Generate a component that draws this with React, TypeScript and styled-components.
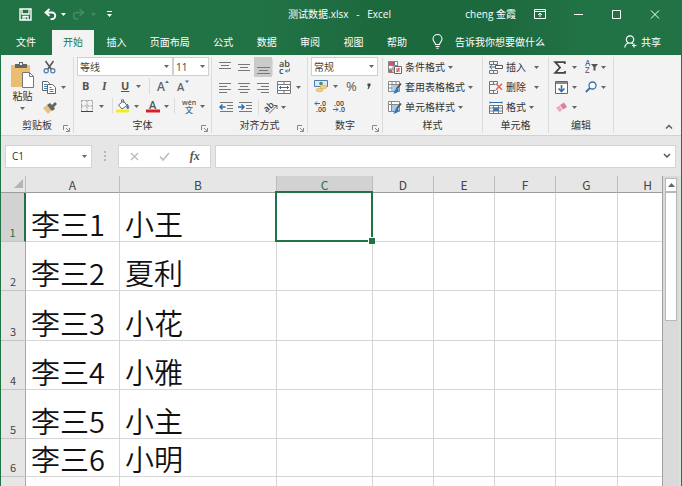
import React from "react";
import styled, { createGlobalStyle, css } from "styled-components";

const GREEN = "#217346";

const GlobalStyle = createGlobalStyle`
  * { box-sizing: border-box; }
  body { margin: 0; }
  body, button, input, select, table {
    font-family: "Open Sans", "Noto Sans CJK SC", sans-serif;
    font-size: 10px;
    line-height: 14px;
    color: #333;
  }
  button, input, select { margin: 0; padding: 0; border: 0; background: transparent; border-radius: 0; }
  svg { display: block; flex: none; overflow: visible; }
`;

const Window = styled.div`
  display: flex;
  flex-direction: column;
  height: 100vh;
  overflow: hidden;
  background: #e6e6e6;
  border-left: 1px solid ${GREEN};
  border-right: 1px solid ${GREEN};
`;

const Banner = styled.header`
  flex: none;
  color: #fff;
  background: linear-gradient(90deg, #217346 0%, #217346 38%, #1d693e 55%, #1d693e 74%, #217346 86%, #217346 100%);
`;

const TitleBar = styled.div`
  display: grid;
  grid-template-columns: 1fr auto 1fr;
  align-items: center;
  height: 30px;
  padding: 0 4px 2px 1px;
`;

const Title = styled.h1`
  margin: 0;
  font-size: 10px;
  font-weight: 400;
  white-space: pre;
`;

const QuickAccess = styled.div`
  display: flex;
  align-items: center;
  padding-left: 8px;
`;

const WindowControls = styled.div`
  display: flex;
  align-items: center;
  justify-content: flex-end;
`;

const Account = styled.span`
  margin-right: 6px;
`;

const BarButton = styled.button<{ $w: number; $dim?: boolean }>`
  display: flex;
  align-items: center;
  justify-content: center;
  width: ${(p) => p.$w}px;
  height: 24px;
  color: ${(p) => (p.$dim ? "#5b9a77" : "#fff")};
`;

const TabBar = styled.div`
  display: flex;
  align-items: stretch;
  height: 25px;
`;

const TabList = styled.nav`
  display: flex;
  justify-content: space-between;
  flex: 0 0 366px;
`;

const Tab = styled.button<{ $active?: boolean }>`
  padding: 0 11px 2px;
  white-space: nowrap;
  color: ${(p) => (p.$active ? GREEN : "#fff")};
  background: ${(p) => (p.$active ? "#f3f3f3" : "transparent")};
`;

const FileTab = styled(Tab)`
  flex: 0 0 51px;
  padding: 0 1px 2px 0;
`;

const TellMe = styled.button`
  display: flex;
  align-items: center;
  gap: 12px;
  padding: 0 0 2px 14px;
  color: #fff;
  white-space: nowrap;
`;

const Share = styled.button`
  display: flex;
  align-items: center;
  gap: 4px;
  margin-left: auto;
  padding: 0 20px 2px 0;
  color: #fff;
`;

const Ribbon = styled.div`
  display: flex;
  flex: none;
  height: 81px;
  padding: 2px 0;
  background: #f3f3f3;
  border-bottom: 1px solid #d2d2d2;
`;

const Group = styled.section<{ $w: number }>`
  display: flex;
  flex-direction: column;
  flex: 0 0 ${(p) => p.$w}px;
  border-right: 1px solid #dcdcdc;
`;

const GroupFooter = styled.div`
  display: grid;
  grid-template-columns: 13px 1fr 13px;
  align-items: center;
  height: 20px;
`;

const GroupName = styled.h2`
  grid-column: 2;
  margin: 0;
  font-size: 10px;
  font-weight: 400;
  text-align: center;
  white-space: nowrap;
`;

const Launcher = styled.button`
  display: grid;
  place-items: end center;
  height: 14px;
`;

const ToolRow = styled.div<{ $pad: number }>`
  display: flex;
  align-items: center;
  height: 20px;
  padding-left: ${(p) => p.$pad}px;
`;

const Tool = styled.button<{ $w: number; $gap?: number; $on?: boolean }>`
  display: flex;
  align-items: center;
  gap: ${(p) => p.$gap ?? 5}px;
  flex: 0 0 ${(p) => p.$w}px;
  height: 20px;
  white-space: nowrap;
  color: #444;
  ${(p) =>
    p.$on &&
    css`
      justify-content: center;
      background: #cbcbcb;
    `}
`;

const WideTool = styled.button`
  display: flex;
  align-items: center;
  gap: 3px;
  height: 20px;
  white-space: nowrap;
`;

const SplitTool = styled(WideTool)`
  & > svg:last-child { margin-left: 5px; }
`;

const Letter = styled.span<{ $bold?: boolean; $italic?: boolean; $underline?: boolean; $size?: number }>`
  font-family: ${(p) => (p.$italic ? '"Liberation Serif", serif' : '"Open Sans", sans-serif')};
  font-size: ${(p) => p.$size ?? 11}px;
  font-weight: ${(p) => (p.$bold ? 700 : 400)};
  font-style: ${(p) => (p.$italic ? "italic" : "normal")};
  text-decoration: ${(p) => (p.$underline ? "underline" : "none")};
  color: #555;
`;

const Divider = styled.span<{ $space: number }>`
  flex: none;
  width: 1px;
  height: 16px;
  margin-right: ${(p) => p.$space}px;
  background: #dcdcdc;
`;

const ClipboardBody = styled.div`
  display: flex;
  height: 60px;
`;

const PasteButton = styled.button`
  display: flex;
  flex-direction: column;
  align-items: center;
  flex: 0 0 41px;
  padding: 4px 0 0 2px;
  color: #333;
`;

const PasteLabel = styled.span`
  margin: 0 0 4px;
`;

const SelectBox = styled.span<{ $w: number }>`
  display: grid;
  align-items: center;
  flex: 0 0 ${(p) => p.$w}px;
  height: 19px;
  background: #fff;
  border: 1px solid #d0d0d0;
  & > * { grid-area: 1 / 1; }
  & > svg { justify-self: end; margin-right: 3px; pointer-events: none; }
`;

const Select = styled.select`
  appearance: none;
  width: 100%;
  height: 17px;
  padding-left: 2px;
  color: #444;
`;

const CollapseArea = styled.div`
  display: flex;
  flex: 1;
  align-items: flex-end;
  justify-content: flex-end;
  padding: 0 8px 4px 0;
`;

const FormulaBar = styled.div`
  display: flex;
  flex: none;
  align-items: center;
  height: 40px;
  padding: 0 5px 0 4px;
`;

const NameBox = styled.div`
  display: flex;
  align-items: center;
  flex: 0 0 87px;
  min-width: 0;
  height: 23px;
  padding-right: 4px;
  background: #fff;
  border: 1px solid #d4d4d4;
`;

const NameInput = styled.input`
  flex: 1;
  width: 0;
  min-width: 0;
  padding-left: 6px;
  outline: none;
`;

const Grip = styled.span`
  display: grid;
  place-items: center;
  flex: 0 0 26px;
`;

const FormulaTools = styled.div`
  display: flex;
  align-items: center;
  justify-content: space-around;
  flex: 0 0 93px;
  height: 23px;
  margin-right: 4px;
  background: #fff;
  border: 1px solid #d4d4d4;
`;

const PlainButton = styled.button`
  display: grid;
  place-items: center;
  width: 16px;
  height: 16px;
`;

const FormulaField = styled.div`
  display: flex;
  align-items: center;
  flex: 1;
  min-width: 0;
  height: 23px;
  background: #fff;
  border: 1px solid #d4d4d4;
`;

const FormulaInput = styled.input`
  flex: 1;
  min-width: 0;
  padding-left: 4px;
  outline: none;
`;

const Workspace = styled.main`
  display: flex;
  flex: 1;
  min-height: 0;
`;

const SheetPane = styled.div`
  flex: 1;
  min-width: 0;
  overflow: hidden;
  border-right: 1px solid #a0a0a0;
`;

const Sheet = styled.table`
  width: 100%;
  table-layout: fixed;
  border-collapse: separate;
  border-spacing: 0;
  font-family: "Noto Sans CJK SC", sans-serif;
`;

const Col = styled.col<{ $w?: number }>`
  width: ${(p) => (p.$w ? `${p.$w}px` : "auto")};
`;

const ColumnHead = styled.th<{ $active?: boolean }>`
  height: 17px;
  padding: 0;
  font-family: inherit;
  font-size: 12px;
  font-weight: 400;
  line-height: 14px;
  vertical-align: bottom;
  color: ${(p) => (p.$active ? GREEN : "#444")};
  background: ${(p) => (p.$active ? "#d2d2d2" : "#e6e6e6")};
  border-right: 1px solid #bdbdbd;
  border-bottom: 1px solid #9c9c9c;
  &:last-child { border-right: 0; padding-left: 15px; }
`;

const Corner = styled.td`
  height: 17px;
  padding: 0 2px 1px 0;
  border-right: 1px solid #bdbdbd;
  border-bottom: 1px solid #9c9c9c;
  & > svg { margin-left: auto; }
`;

const RowHead = styled.th<{ $active?: boolean; $h: number }>`
  height: ${(p) => p.$h}px;
  padding: 0;
  font-size: 11px;
  font-weight: 400;
  line-height: 18px;
  vertical-align: bottom;
  color: ${(p) => (p.$active ? GREEN : "#444")};
  background: ${(p) => (p.$active ? "#d2d2d2" : "#e6e6e6")};
  border-right: ${(p) => (p.$active ? `2px solid ${GREEN}` : "1px solid #a8a8a8")};
  border-bottom: 1px solid #c4c4c4;
`;

const Cell = styled.td<{ $selected?: boolean }>`
  padding: 0 0 2px 5px;
  font-size: 29px;
  font-weight: 350;
  line-height: 32px;
  vertical-align: bottom;
  white-space: nowrap;
  color: #111;
  background: #fff;
  border-right: 1px solid #d6d6d6;
  border-bottom: 1px solid #d6d6d6;
  &:last-child { border-right: 0; }
  ${(p) =>
    p.$selected &&
    css`
      position: relative;
      &::before {
        content: "";
        position: absolute;
        inset: -2px -1px -1px -2px;
        border: 2px solid ${GREEN};
      }
      &::after {
        content: "";
        position: absolute;
        right: -3px;
        bottom: -3px;
        width: 6px;
        height: 6px;
        background: ${GREEN};
        border: 1px solid #fff;
        border-width: 1px 0 0 1px;
      }
    `}
`;

const ScrollBar = styled.div`
  display: flex;
  flex-direction: column;
  flex: 0 0 18px;
  padding: 2px 2px 0 2px;
  background: #dadada;
  border-right: 2px solid #cfe8db;
`;

const ScrollUp = styled.button`
  display: grid;
  place-items: center;
  flex: 0 0 14px;
  background: #fff;
  border: 1px solid #b8b8b8;
`;

const ScrollThumb = styled.div`
  flex: 0 0 129px;
  background: #fff;
  border: 1px solid #b8b8b8;
`;

const Caret = ({ color = "#666" }: { color?: string }) => (
  <svg width="5" height="3" viewBox="0 0 5 3"><path d="M0 0h5L2.5 3z" fill={color} /></svg>
);

type IconProps = { w: number; h: number; children: React.ReactNode; stroke?: string };
const Icon = ({ w, h, children, stroke = "#666" }: IconProps) => (
  <svg width={w} height={h} viewBox={`0 0 ${w} ${h}`} fill="none" stroke={stroke} strokeWidth="1" aria-hidden="true">
    {children}
  </svg>
);

const Save = () => (
  <Icon w={13} h={13} stroke="#fff">
    <path d="M1 1h11v11H1z" strokeWidth="1.4" />
    <path d="M3 1.5v4.5h7V1.5" strokeWidth="1.3" />
    <path d="M4 12V8.5h5V12M6 9v3" strokeWidth="1.3" />
  </Icon>
);

const Undo = () => (
  <Icon w={13} h={12} stroke="#fff">
    <path d="M5.5 1L1.5 4.5l4 3.5M2 4.5h6a3.3 3.3 0 0 1 0 6.6H6.5" strokeWidth="1.8" />
  </Icon>
);

const Redo = () => (
  <Icon w={13} h={12} stroke="#438c63">
    <path d="M7.5 1l4 3.5-4 3.5M11 4.5H5a3.3 3.3 0 0 0 0 6.6h1" strokeWidth="1.6" />
  </Icon>
);

const PasteIcon = () => (
  <Icon w={25} h={28}>
    <path d="M1 4h19v22H1z" fill="#ebbd70" stroke="none" />
    <path d="M5 3h4V1h4v2h4v4H5z" fill="#666" stroke="none" />
    <path d="M10 2h2v2h-2z" fill="#f3f3f3" stroke="none" />
    <path d="M12.5 11.5h7l4 4v11h-11z" fill="#fff" stroke="#777" />
    <path d="M19.5 11.5v4h4" stroke="#777" />
  </Icon>
);

const Cut = () => (
  <Icon w={13} h={14}>
    <path d="M2.5 1l6 8.5M10.5 1l-6 8.5" stroke="#555" strokeWidth="1.5" />
    <circle cx="3.2" cy="10.8" r="2.1" stroke="#4a7dae" strokeWidth="1.2" />
    <circle cx="9.8" cy="10.8" r="2.1" stroke="#4a7dae" strokeWidth="1.2" />
  </Icon>
);

const Copy = () => (
  <Icon w={14} h={13}>
    <path d="M.5.5h5l2 2v7h-7z" fill="#fff" />
    <path d="M2 3.5h3M2 5.5h3M2 7.5h3" stroke="#4a7dae" />
    <path d="M5.5 3.5h5l3 3v6h-8z" fill="#fff" />
    <path d="M7.5 6.5h2M7.5 8.5h4M7.5 10.5h4" stroke="#4a7dae" />
  </Icon>
);

const Brush = () => (
  <Icon w={14} h={13}>
    <path d="M0 7l4-3 5 5-4 4z" fill="#e5c27e" stroke="none" />
    <path d="M4 4l3-2 2 2 3-3 2 2-3 3 1 2-3 2z" fill="#666" stroke="none" />
  </Icon>
);

const Borders = () => (
  <Icon w={12} h={12} stroke="#999">
    <path d="M.5.5h11v11H.5zM6 .5v11M.5 6h11" strokeDasharray="2 1" />
    <path d="M0 11.5h12" stroke="#444" />
  </Icon>
);

const Fill = () => (
  <Icon w={14} h={14}>
    <path d="M2.5 6l5-4 3.5 4.5-5 3.5z" fill="#fff" stroke="#666" />
    <path d="M5.5 4V.8h2V4" stroke="#777" />
    <path d="M11 5c1.5 1.5 2 3 1.5 4.5h-1.5z" fill="#4a7dae" stroke="#4a7dae" />
    <path d="M0 10.5h13v3H0z" fill="#f2ee1b" stroke="none" />
  </Icon>
);

const FontColor = () => (
  <Icon w={14} h={14}>
    <text x="3" y="9.5" fontSize="11" fontWeight="600" fontFamily="Open Sans" fill="#555" stroke="none">A</text>
    <path d="M0 10.5h14v3H0z" fill="#dc1f26" stroke="none" />
  </Icon>
);

const Phonetic = () => (
  <Icon w={14} h={15}>
    <text x="0" y="6" fontSize="7" fontWeight="600" fontFamily="Open Sans" fill="#555" stroke="none">wén</text>
    <text x="3" y="14" fontSize="8" fontWeight="500" fontFamily="Noto Sans CJK SC" fill="#3a6ea5" stroke="none">文</text>
  </Icon>
);

const GrowFont = ({ up }: { up?: boolean }) => (
  <Icon w={12} h={13}>
    <text x="0" y="11" fontSize={up ? 12 : 11} fontWeight="600" fontFamily="Open Sans" fill="#666" stroke="none">A</text>
    <path d={up ? "M8 3h4L10 .5z" : "M8 .5h4L10 3z"} fill="#4a6f96" stroke="none" />
  </Icon>
);

const Lines = ({ rows }: { rows: [number, number, number][] }) => (
  <Icon w={13} h={13} stroke="#777">
    {rows.map(([x, y, w]) => <path key={y} d={`M${x} ${y + 0.5}h${w}`} />)}
  </Icon>
);

const Wrap = () => (
  <Icon w={13} h={15}>
    <text x="0" y="7" fontSize="9" fontWeight="600" fontFamily="Open Sans" fill="#444" stroke="none">ab</text>
    <text x="0" y="14" fontSize="9" fontWeight="600" fontFamily="Open Sans" fill="#444" stroke="none">c</text>
    <path d="M10.5 8.5v2.5H6.5M8 9.5L6.5 11 8 12.5" stroke="#3a6ea5" />
  </Icon>
);

const Merge = () => (
  <Icon w={14} h={13} stroke="#777">
    <path d="M.5.5h13v12H.5zM.5 3.5h13M.5 9.5h13M7 .5v3M7 9.5v3" fill="#fff" />
    <path d="M2 6.5h10M4 5L2.5 6.5 4 8M10 5l1.5 1.5L10 8" stroke="#3a6ea5" />
  </Icon>
);

const Indent = ({ right }: { right?: boolean }) => (
  <Icon w={14} h={12} stroke="#777">
    <path d="M1 1.5h13M8 4.5h6M8 7.5h6M1 10.5h13" />
    <path d={right ? "M0 6h5.5M3.5 3.5L6 6 3.5 8.5" : "M6.5 6H1M3.5 3.5L1 6l2.5 2.5"} stroke="#2f6fae" strokeWidth="1.5" />
  </Icon>
);

const Orientation = () => (
  <Icon w={14} h={13}>
    <text x="0" y="9" fontSize="9" fontWeight="600" fontFamily="Open Sans" fill="#444" stroke="none" transform="rotate(-42 5 7)">ab</text>
    <path d="M5 12.5l8-8M9.5 4.5H13V8" stroke="#666" />
  </Icon>
);

const Currency = () => (
  <Icon w={15} h={14}>
    <path d="M.5 1.5h13v6H.5z" fill="#dbeaf6" stroke="#4a7dae" />
    <circle cx="7" cy="4.5" r="1.8" fill="#4a9060" stroke="none" />
    <ellipse cx="9.5" cy="8" rx="3.5" ry="1.7" fill="#f0cf7a" stroke="#d3a94e" strokeWidth=".6" />
    <ellipse cx="5.5" cy="11" rx="3.5" ry="1.7" fill="#f0cf7a" stroke="#d3a94e" strokeWidth=".6" />
  </Icon>
);

const Decimals = ({ less }: { less?: boolean }) => (
  <Icon w={13} h={13}>
    <g fill="#444" stroke="none" fontSize="7" fontWeight="600" fontFamily="Open Sans">
      <text x={less ? 1 : 6} y="6">{less ? ".00" : ".0"}</text>
      <text x={less ? 6 : 2} y="12">{less ? ".0" : ".00"}</text>
    </g>
    <path d={less ? "M0 9.5h5M3 7.5l2 2-2 2" : "M6 3.5H1M3 1.5l-2 2 2 2"} stroke="#2f6fae" />
  </Icon>
);

const Conditional = () => (
  <Icon w={14} h={13} stroke="#888">
    <path d="M.5.5h9v11h-9zM.5 4.5h9M.5 8h9M5 .5v11" fill="#fff" />
    <path d="M1 1h4v3H1zM1 8.5h3v3H1z" fill="#d9555a" stroke="none" />
    <path d="M5 1h2v3H5z" fill="#4a7dae" stroke="none" />
    <path d="M6.5 5.5h7v7h-7z" fill="#fff" stroke="#666" />
    <path d="M8 8h4M8 10h4M11 6.8L9 11.2" stroke="#c34a50" />
  </Icon>
);

const StyleBrush = ({ cell }: { cell?: boolean }) => (
  <Icon w={14} h={13} stroke="#888">
    <path d={cell ? "M.5.5h11v10H.5zM.5 3.5h11M3.5.5v10" : "M.5.5h11v10H.5zM.5 3.5h11M.5 7h11M4 .5v10M8 .5v10"} fill="#fff" />
    <path d="M4 4h7v3l-4 3H4z" fill="#a8cbea" stroke="none" />
    <path d="M13 2.5L8.5 8" stroke="#555" strokeWidth="1.8" />
    <path d="M9 7l2 2c-1 3-4 3.5-6 3.5 2-1 1.5-4 4-5.5z" fill="#3777b5" stroke="none" />
  </Icon>
);

const InsertCells = () => (
  <Icon w={14} h={13} stroke="#777">
    <path d="M.5 3.5v-3h8v3M4.5.5v3M.5 3.5h8M.5 9.5v3h8v-3M4.5 9.5v3M.5 9.5h8" />
    <path d="M6.5 4.5h7v3h-7z" fill="#fff" stroke="#555" />
    <path d="M6 6H.5M3 3.8L.8 6 3 8.2" stroke="#2f6fae" />
  </Icon>
);

const DeleteCells = () => (
  <Icon w={14} h={13} stroke="#777">
    <path d="M.5 3.5v-3h8v3M4.5.5v3M.5 9.5v3h8v-3M4.5 9.5v3M.5 9.5h6M.5 3.5h6M.5 3.5v6h5" />
    <path d="M7 2.8l6 6M13 2.8l-6 6" stroke="#d9655f" strokeWidth="1.5" />
  </Icon>
);

const FormatCells = () => (
  <Icon w={14} h={13} stroke="#777">
    <path d="M1 1.5h12M1 .5v2M13 .5v2" stroke="#2f6fae" />
    <path d="M.5 4.5h13v8H.5zM.5 7h13M.5 10h13M4.5 4.5v8M9.5 4.5v8" fill="#fff" />
    <path d="M5 6.5h4.5v3.5H5z" fill="#3777b5" stroke="none" />
  </Icon>
);

const Sum = () => (
  <Icon w={14} h={13}>
    <path d="M11.8 3V1.2H2.2L7 6.5l-4.8 5.3h9.8V10" stroke="#444" strokeWidth="1.8" />
  </Icon>
);

const SortFilter = () => (
  <Icon w={14} h={14}>
    <g stroke="none" fontSize="8" fontFamily="Open Sans" fontWeight="600">
      <text x="0" y="6" fill="#3a6ea5">A</text>
      <text x="0" y="13" fill="#7a5b99">Z</text>
    </g>
    <path d="M6 4h7l-2.500 3v3.500h-2V7z" fill="#555" stroke="none" />
  </Icon>
);

const FillDown = () => (
  <Icon w={13} h={13} stroke="#666">
    <path d="M.5.5h12v12H.5z" fill="#fff" />
    <path d="M1 1h11v2H1z" fill="#888" stroke="none" />
    <path d="M6.5 4v6.5M3.5 7.5l3 3 3-3" stroke="#2f6fae" strokeWidth="1.6" />
  </Icon>
);

const Find = () => (
  <Icon w={13} h={12}>
    <circle cx="7.5" cy="4.5" r="3.5" fill="#fff" stroke="#3a6ea5" strokeWidth="1.3" />
    <path d="M5 7L.8 11" stroke="#3a6ea5" strokeWidth="1.8" />
  </Icon>
);

const Eraser = () => (
  <Icon w={13} h={11}>
    <path d="M5 3l4-2.5L12 5 8 7.5z" fill="#e07f9c" stroke="none" />
    <path d="M4.3 3.5L7.3 8l-2.800 2L1 5.700z" fill="#eda9bd" stroke="none" />
  </Icon>
);

const Bulb = () => (
  <Icon w={11} h={15} stroke="#fff">
    <path d="M3.5 10.5C3.5 8.5 1 7.5 1 5a4.5 4.5 0 0 1 9 0c0 2.5-2.5 3.5-2.5 5.5zM3.5 12.5h4M4.5 14.3h2" strokeWidth="1.1" />
  </Icon>
);

const Person = () => (
  <Icon w={13} h={13} stroke="#fff">
    <circle cx="6" cy="4.5" r="3.7" strokeWidth="1.2" />
    <path d="M.8 12.5c.3-2.5 1.7-4 3.7-4.5M7.5 8l1.5.8M10 8.5v4M8 10.5h4.5" strokeWidth="1.2" />
  </Icon>
);

const LauncherIcon = () => (
  <Icon w={7} h={7} stroke="#888">
    <path d="M.5 5V.5H5M3 3l3 3M6.5 3v3.5H3" />
  </Icon>
);

type GroupProps = { name: string; w: number; launcher?: boolean; children: React.ReactNode };
const RibbonGroup = ({ name, w, launcher, children }: GroupProps) => (
  <Group $w={w} aria-label={name}>
    {children}
    <GroupFooter>
      <GroupName>{name}</GroupName>
      {launcher && <Launcher aria-label={`${name}设置`}><LauncherIcon /></Launcher>}
    </GroupFooter>
  </Group>
);

const tabs = ["开始", "插入", "页面布局", "公式", "数据", "审阅", "视图", "帮助"];
const columns: { name: string; w?: number }[] = [
  { name: "A", w: 94 }, { name: "B", w: 157 }, { name: "C", w: 96 }, { name: "D", w: 61 },
  { name: "E", w: 61 }, { name: "F", w: 61 }, { name: "G", w: 62 }, { name: "H" },
];
const rows: { h: number; values: string[] }[] = [
  { h: 49, values: ["李三1", "小王"] },
  { h: 49, values: ["李三2", "夏利"] },
  { h: 50, values: ["李三3", "小花"] },
  { h: 49, values: ["李三4", "小雅"] },
  { h: 49, values: ["李三5", "小主"] },
  { h: 38, values: ["李三6", "小明"] },
  { h: 49, values: [] },
];

export default function App() {
  return (
    <Window lang="zh-CN">
      <GlobalStyle />
      <Banner>
        <TitleBar>
          <QuickAccess>
            <BarButton $w={31} aria-label="保存"><Save /></BarButton>
            <BarButton $w={18} aria-label="撤消"><Undo /></BarButton>
            <BarButton $w={8} aria-label="撤消列表"><Caret color="#fff" /></BarButton>
            <BarButton $w={22} $dim aria-label="恢复"><Redo /></BarButton>
            <BarButton $w={8} $dim aria-label="恢复列表"><Caret color="#438c63" /></BarButton>
            <BarButton $w={24} aria-label="自定义快速访问工具栏">
              <Icon w={5} h={6} stroke="#fff"><path d="M0 .5h5" /><path d="M0 3h5L2.5 6z" fill="#fff" stroke="none" /></Icon>
            </BarButton>
          </QuickAccess>
          <Title>{"测试数据.xlsx   -   Excel"}</Title>
          <WindowControls>
            <Account>cheng 金霞</Account>
            <BarButton $w={35} aria-label="功能区显示选项">
              <Icon w={12} h={10} stroke="#fff"><path d="M.5.5h11v9H.5zM.5 2.5h11M6 8V4.5M4 6l2-2 2 2" /></Icon>
            </BarButton>
            <BarButton $w={42} aria-label="最小化"><Icon w={9} h={1} stroke="#fff"><path d="M0 .5h9" /></Icon></BarButton>
            <BarButton $w={34} aria-label="最大化"><Icon w={9} h={9} stroke="#fff"><path d="M.5.5h8v8h-8z" /></Icon></BarButton>
            <BarButton $w={44} aria-label="关闭"><Icon w={10} h={9} stroke="#fff"><path d="M1 .5l8 8M9 .5l-8 8" /></Icon></BarButton>
          </WindowControls>
        </TitleBar>
        <TabBar>
          <FileTab>文件</FileTab>
          <TabList>
            {tabs.map((t, i) => <Tab key={t} $active={i === 0}>{t}</Tab>)}
          </TabList>
          <TellMe><Bulb />告诉我你想要做什么</TellMe>
          <Share><Person />共享</Share>
        </TabBar>
      </Banner>

      <Ribbon>
        <RibbonGroup name="剪贴板" w={73} launcher>
          <ClipboardBody>
            <PasteButton><PasteIcon /><PasteLabel>粘贴</PasteLabel><Caret /></PasteButton>
            <div>
              <ToolRow $pad={1}><Tool $w={14} aria-label="剪切"><Cut /></Tool></ToolRow>
              <ToolRow $pad={0}><Tool $w={26} aria-label="复制"><Copy /><Caret /></Tool></ToolRow>
              <ToolRow $pad={1}><Tool $w={14} aria-label="格式刷"><Brush /></Tool></ToolRow>
            </div>
          </ClipboardBody>
        </RibbonGroup>

        <RibbonGroup name="字体" w={138} launcher>
          <ToolRow $pad={3}>
            <SelectBox $w={96}><Select aria-label="字体名称"><option>等线</option></Select><Caret /></SelectBox>
            <SelectBox $w={36}><Select aria-label="字号"><option>11</option></Select><Caret /></SelectBox>
          </ToolRow>
          <ToolRow $pad={8}>
            <Tool $w={20} aria-label="加粗"><Letter $bold>B</Letter></Tool>
            <Tool $w={19} aria-label="倾斜"><Letter $italic $bold $size={12}>I</Letter></Tool>
            <Tool $w={28} $gap={7} aria-label="下划线"><Letter $bold $underline>U</Letter><Caret /></Tool>
            <Divider $space={7} />
            <Tool $w={20} aria-label="增大字号"><GrowFont up /></Tool>
            <Tool $w={14} aria-label="减小字号"><GrowFont /></Tool>
          </ToolRow>
          <ToolRow $pad={7}>
            <Tool $w={31} $gap={6} aria-label="边框"><Borders /><Caret /></Tool>
            <Divider $space={3} />
            <Tool $w={30} $gap={4} aria-label="填充颜色"><Fill /><Caret /></Tool>
            <Tool $w={28} $gap={4} aria-label="字体颜色"><FontColor /><Caret /></Tool>
            <Divider $space={7} />
            <Tool $w={24} $gap={4} aria-label="拼音"><Phonetic /><Caret /></Tool>
          </ToolRow>
        </RibbonGroup>

        <RibbonGroup name="对齐方式" w={96} launcher>
          <ToolRow $pad={7}>
            <Tool $w={19} aria-label="顶端对齐"><Lines rows={[[0, 1, 12], [2, 4, 8], [0, 7, 12]]} /></Tool>
            <Tool $w={16} aria-label="垂直居中"><Lines rows={[[0, 3, 12], [2, 6, 8], [0, 9, 12]]} /></Tool>
            <Tool $w={18} $on aria-label="底端对齐"><Lines rows={[[0, 6, 13], [2, 9, 9], [0, 12, 13]]} /></Tool>
            <Divider $space={6} />
            <Tool $w={14} aria-label="自动换行"><Wrap /></Tool>
          </ToolRow>
          <ToolRow $pad={7}>
            <Tool $w={19} aria-label="左对齐"><Lines rows={[[0, 2, 12], [0, 5, 8], [0, 8, 12], [0, 11, 8]]} /></Tool>
            <Tool $w={19} aria-label="居中"><Lines rows={[[0, 2, 12], [2, 5, 8], [0, 8, 12], [2, 11, 8]]} /></Tool>
            <Tool $w={20} aria-label="右对齐"><Lines rows={[[0, 2, 12], [4, 5, 8], [0, 8, 12], [4, 11, 8]]} /></Tool>
            <Tool $w={24} aria-label="合并后居中"><Merge /><Caret /></Tool>
          </ToolRow>
          <ToolRow $pad={7}>
            <Tool $w={19} aria-label="减少缩进量"><Indent /></Tool>
            <Tool $w={20} aria-label="增加缩进量"><Indent right /></Tool>
            <Divider $space={5} />
            <Tool $w={24} $gap={3} aria-label="方向"><Orientation /><Caret /></Tool>
          </ToolRow>
        </RibbonGroup>

        <RibbonGroup name="数字" w={75} launcher>
          <ToolRow $pad={3}>
            <SelectBox $w={67}><Select aria-label="数字格式"><option>常规</option></Select><Caret /></SelectBox>
          </ToolRow>
          <ToolRow $pad={6}>
            <Tool $w={32} $gap={4} aria-label="会计数字格式"><Currency /><Caret /></Tool>
            <Tool $w={21} aria-label="百分比样式"><Letter $size={13}>%</Letter></Tool>
            <Tool $w={8} aria-label="千位分隔样式"><Icon w={4} h={7}><path d="M.5.5h3v2L1.5 6H.5L1.5 3H.5z" fill="#444" stroke="none" /></Icon></Tool>
          </ToolRow>
          <ToolRow $pad={6}>
            <Tool $w={19} aria-label="增加小数位数"><Decimals /></Tool>
            <Tool $w={14} aria-label="减少小数位数"><Decimals less /></Tool>
          </ToolRow>
        </RibbonGroup>

        <RibbonGroup name="样式" w={100}>
          <ToolRow $pad={5}><WideTool><Conditional />条件格式<Caret /></WideTool></ToolRow>
          <ToolRow $pad={5}><WideTool><StyleBrush />套用表格格式<Caret /></WideTool></ToolRow>
          <ToolRow $pad={5}><WideTool><StyleBrush cell />单元格样式<Caret /></WideTool></ToolRow>
        </RibbonGroup>

        <RibbonGroup name="单元格" w={66}>
          <ToolRow $pad={6}><SplitTool><InsertCells />插入<Caret /></SplitTool></ToolRow>
          <ToolRow $pad={6}><SplitTool><DeleteCells />删除<Caret /></SplitTool></ToolRow>
          <ToolRow $pad={6}><WideTool><FormatCells />格式<Caret /></WideTool></ToolRow>
        </RibbonGroup>

        <RibbonGroup name="编辑" w={65}>
          <ToolRow $pad={4}>
            <Tool $w={32} aria-label="自动求和"><Sum /><Caret /></Tool>
            <Tool $w={24} $gap={2} aria-label="排序和筛选"><SortFilter /><Caret /></Tool>
          </ToolRow>
          <ToolRow $pad={6}>
            <Tool $w={30} $gap={4} aria-label="填充"><FillDown /><Caret /></Tool>
            <Tool $w={24} $gap={3} aria-label="查找和选择"><Find /><Caret /></Tool>
          </ToolRow>
          <ToolRow $pad={6}>
            <Tool $w={30} $gap={4} aria-label="清除"><Eraser /><Caret /></Tool>
          </ToolRow>
        </RibbonGroup>

        <CollapseArea>
          <button aria-label="折叠功能区">
            <Icon w={8} h={5} stroke="#555"><path d="M1 4.5l3-3 3 3" strokeWidth="1.4" /></Icon>
          </button>
        </CollapseArea>
      </Ribbon>

      <FormulaBar>
        <NameBox><NameInput aria-label="名称框" defaultValue="C1" /><Caret /></NameBox>
        <Grip><Icon w={2} h={10} stroke="#aaa"><path d="M1 0v10" strokeDasharray="2 2" strokeWidth="1.5" /></Icon></Grip>
        <FormulaTools>
          <PlainButton aria-label="取消"><Icon w={9} h={9} stroke="#bbb"><path d="M1 1l7 7M8 1L1 8" strokeWidth="1.4" /></Icon></PlainButton>
          <PlainButton aria-label="输入"><Icon w={11} h={9} stroke="#bbb"><path d="M1 4.5L4 8l6-7" strokeWidth="1.5" /></Icon></PlainButton>
          <PlainButton aria-label="插入函数"><Letter $italic $bold $size={12}>fx</Letter></PlainButton>
        </FormulaTools>
        <FormulaField>
          <FormulaInput aria-label="编辑栏" />
          <PlainButton aria-label="展开编辑栏"><Icon w={8} h={6} stroke="#555"><path d="M1 1l3 3 3-3" strokeWidth="1.5" /></Icon></PlainButton>
        </FormulaField>
      </FormulaBar>

      <Workspace>
        <SheetPane>
          <Sheet>
            <colgroup>
              <Col $w={25} />
              {columns.map((c) => <Col key={c.name} $w={c.w} />)}
            </colgroup>
            <thead>
              <tr>
                <Corner><Icon w={9} h={9}><path d="M9 0v9H0z" fill="#b4b4b4" stroke="none" /></Icon></Corner>
                {columns.map((c) => <ColumnHead key={c.name} $active={c.name === "C"} scope="col">{c.name}</ColumnHead>)}
              </tr>
            </thead>
            <tbody>
              {rows.map((r, i) => (
                <tr key={i}>
                  <RowHead scope="row" $active={i === 0} $h={r.h}>{i + 1}</RowHead>
                  {columns.map((c, j) => (
                    <Cell key={c.name} $selected={i === 0 && j === 2}>{r.values[j]}</Cell>
                  ))}
                </tr>
              ))}
            </tbody>
          </Sheet>
        </SheetPane>
        <ScrollBar>
          <ScrollUp aria-label="向上滚动"><Icon w={7} h={4}><path d="M0 4h7L3.5 0z" fill="#666" stroke="none" /></Icon></ScrollUp>
          <ScrollThumb />
        </ScrollBar>
      </Workspace>
    </Window>
  );
}
